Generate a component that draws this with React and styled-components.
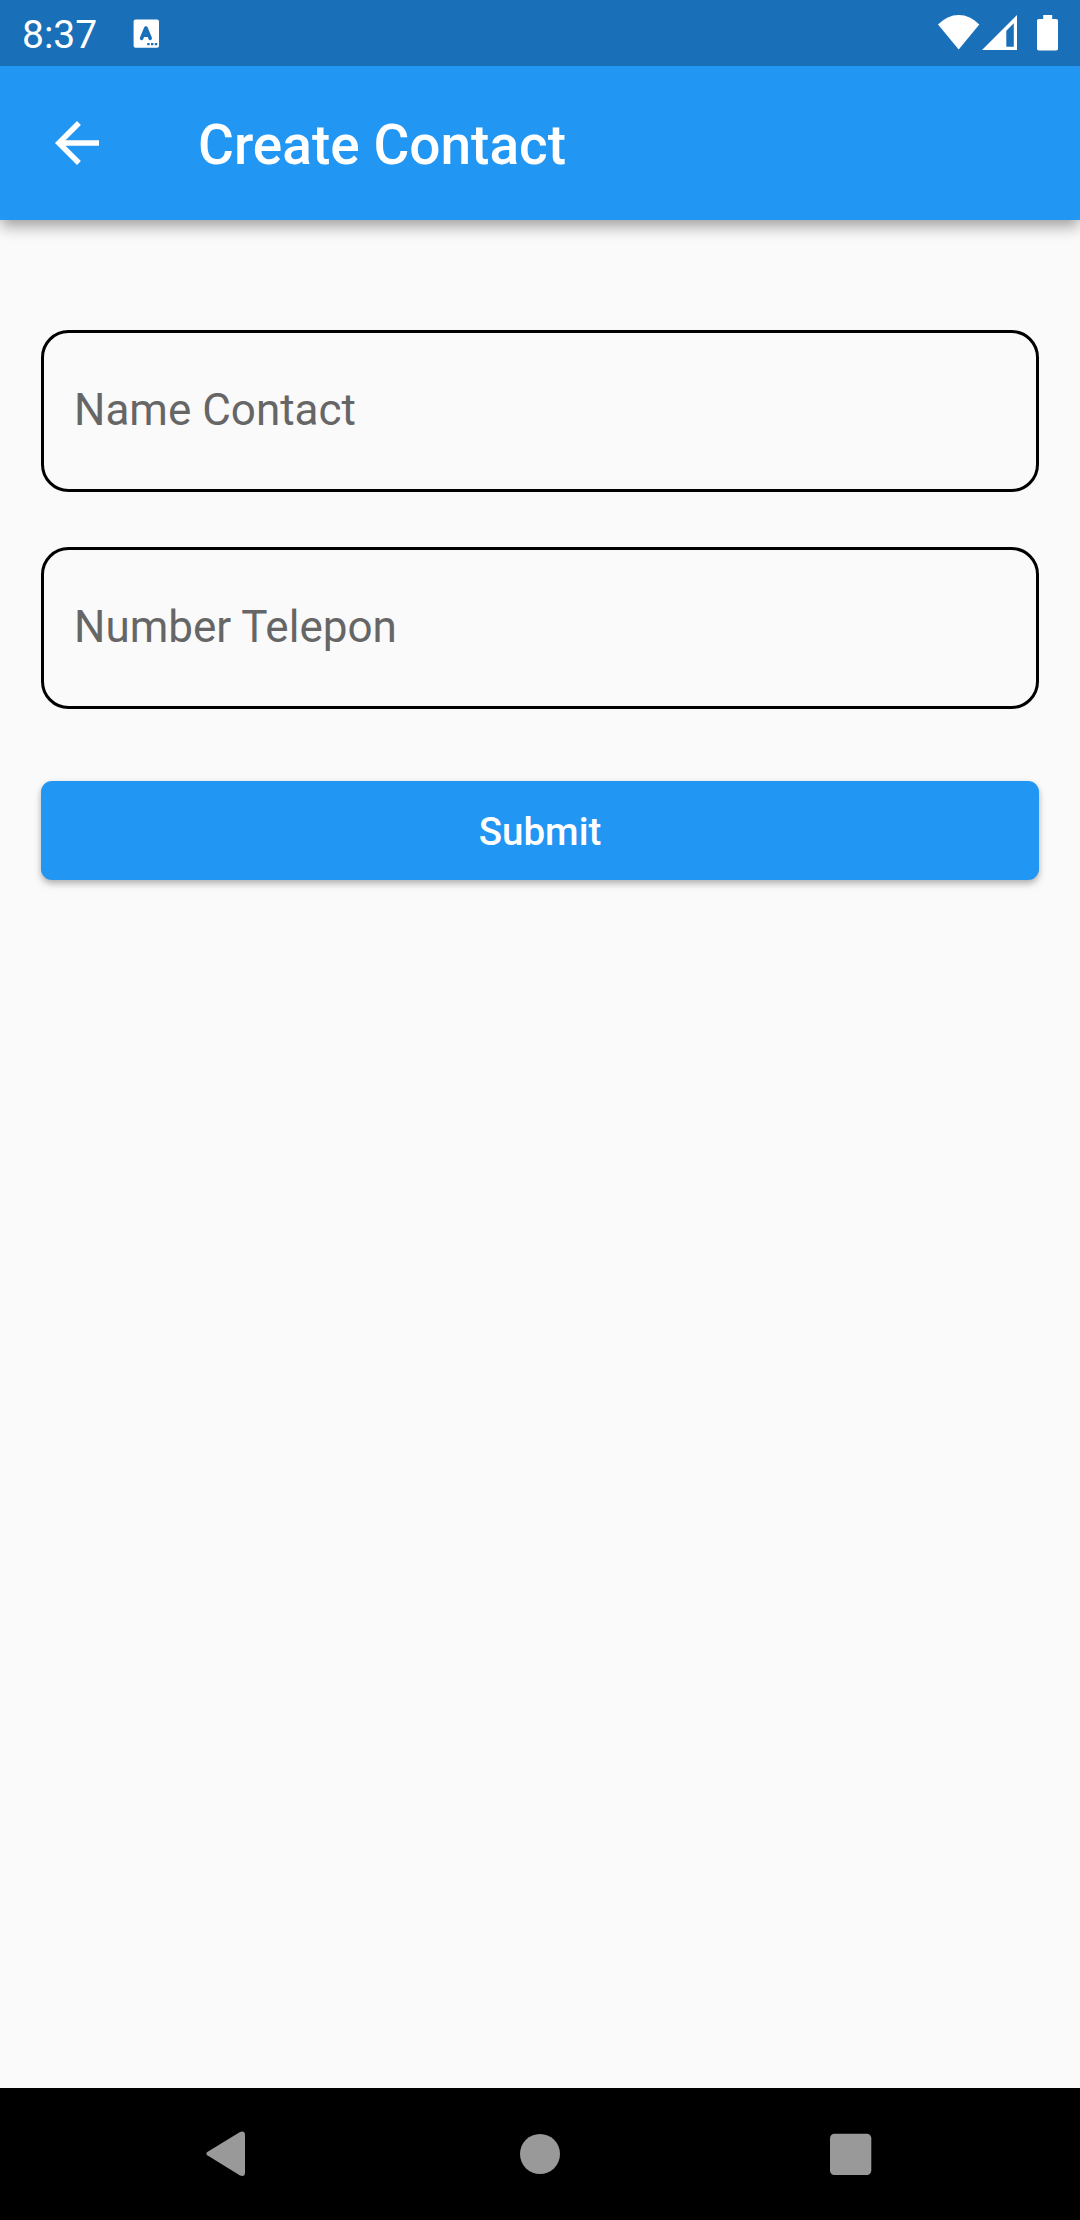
import React from "react";
import styled, { createGlobalStyle } from "styled-components";

const GlobalStyle = createGlobalStyle`
  * { box-sizing: border-box; }
  body { margin: 0; background: #fafafa; }
`;

const Screen = styled.div`
  display: flex;
  flex-direction: column;
  width: 1080px;
  height: 2220px;
  background: #fafafa;
  font-family: Roboto, sans-serif;
  overflow: hidden;
`;

const StatusBar = styled.div`
  display: flex;
  align-items: center;
  justify-content: space-between;
  height: 66px;
  padding: 0 21px 0 22px;
  background: #1a70b8;
  color: #fff;
`;

const StatusGroup = styled.div`
  display: flex;
  align-items: center;
`;

const Clock = styled.span`
  width: 111px;
  font-size: 39px;
  line-height: 46px;
  padding-top: 3px;
`;

const Glyph = styled.svg`
  display: block;
  flex: none;
  margin-left: ${(p) => p.$gap || 0}px;
`;

const AppBar = styled.header`
  position: relative;
  display: flex;
  align-items: center;
  height: 154px;
  padding-left: 44px;
  background: #2196f3;
  color: #fff;
  box-shadow: 0 8px 14px -1px rgba(0, 0, 0, 0.33), 0 1px 10px rgba(0, 0, 0, 0.05);
  clip-path: inset(0 0 -40px 0);
`;

const BackButton = styled.button`
  display: block;
  width: 66px;
  height: 66px;
  padding: 0;
  border: 0;
  background: none;
  color: inherit;
`;

const Title = styled.h1`
  margin: 3px 0 0 88px;
  font-size: 55px;
  line-height: 64px;
  font-weight: 500;
`;

const Form = styled.main`
  display: flex;
  flex-direction: column;
  flex: 1;
  padding: 110px 41px 0;
`;

const Field = styled.label`
  display: flex;
  align-items: flex-start;
  height: 162px;
  margin-bottom: 55px;
  padding: 51px 30px 0;
  border: 3px solid #000;
  border-radius: 27.5px;
  font-size: 44px;
  line-height: 52px;
  color: #666;
`;

const Submit = styled.button`
  height: 99px;
  margin-top: 17px;
  padding: 1px 0 0;
  border: 0;
  border-radius: 11px;
  background: #2196f3;
  color: #fff;
  font-family: inherit;
  font-size: 38.5px;
  font-weight: 500;
  box-shadow: 0 4px 7px rgba(0, 0, 0, 0.26), 0 1px 5px rgba(0, 0, 0, 0.06);
`;

const NavBar = styled.nav`
  display: flex;
  align-items: center;
  height: 132px;
  padding-left: 206px;
  background: #000;
`;

export default function App() {
  return (
    <>
      <GlobalStyle />
      <Screen>
        <StatusBar>
          <StatusGroup>
            <Clock>8:37</Clock>
            <Glyph width="27" height="29" viewBox="0 0 27 29">
              <rect x="0.6" y="0.5" width="25.4" height="28.2" rx="2" fill="#fff" />
              <path d="M8.6 19.3 12.9 9 17.2 19.3M10.5 16.2H16" fill="none" stroke="#1a70b8" strokeWidth="3.6" strokeLinecap="round" strokeLinejoin="round" />
              <path d="M14.2 24h2.4v2.2h-2.4zM18 24h2.4v2.2H18zM21.8 24h2.4v2.2h-2.4z" fill="#1a70b8" />
            </Glyph>
          </StatusGroup>
          <StatusGroup>
            <Glyph width="42" height="36" viewBox="0 0 42 36" fill="#fff">
              <path d="M0 9.6Q9.2.1 20.7.1T41.3 9.6L20.7 34.6Z" />
            </Glyph>
            <Glyph $gap={2} width="36" height="36" viewBox="0 0 36 36" fill="#fff">
              <path fillRule="evenodd" d="M0 35 35 0V35ZM24.3 15.8V31.8H31.8V8.3Z" />
            </Glyph>
            <Glyph $gap={19} width="22" height="36" viewBox="0 0 22 36" fill="#fff">
              <path d="M6.2 0H15.2V4H19.2Q21 4 21 5.8V33.8Q21 35.6 19.2 35.6H1.8Q0 35.6 0 33.8V5.8Q0 4 1.8 4H6.2Z" />
            </Glyph>
          </StatusGroup>
        </StatusBar>
        <AppBar>
          <BackButton aria-label="Back">
            <Glyph width="66" height="66" viewBox="0 0 24 24" fill="#fff">
              <path d="M20 11H7.83l5.59-5.59L12 4l-8 8 8 8 1.41-1.41L7.83 13H20v-2z" />
            </Glyph>
          </BackButton>
          <Title>Create Contact</Title>
        </AppBar>
        <Form>
          <Field>Name Contact</Field>
          <Field>Number Telepon</Field>
          <Submit>Submit</Submit>
        </Form>
        <NavBar>
          <Glyph width="39" height="46" viewBox="0 0 39 46" fill="#999">
            <path d="M1.3 21.1 34 .9Q39 -.8 39 4V41.4Q39 46.2 34 44.5L1.3 24.3Q-.6 22.7 1.3 21.1Z" />
          </Glyph>
          <Glyph $gap={275} width="40" height="40" viewBox="0 0 40 40" fill="#999">
            <circle cx="20" cy="20" r="20" />
          </Glyph>
          <Glyph $gap={270} width="42" height="42" viewBox="0 0 42 42" fill="#999">
            <rect width="41.3" height="41.3" y="0.8" rx="4.5" />
          </Glyph>
        </NavBar>
      </Screen>
    </>
  );
}
